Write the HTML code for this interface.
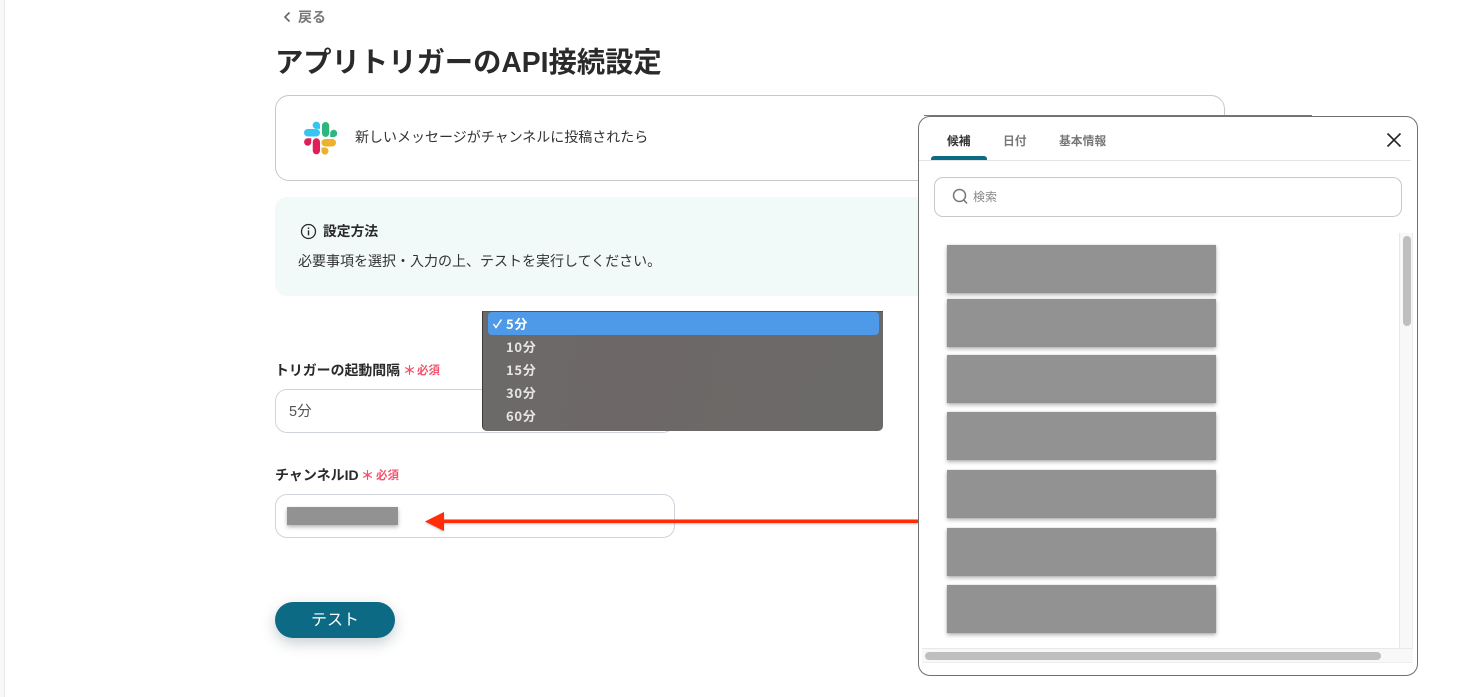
<!DOCTYPE html>
<html lang="ja">
<head>
<meta charset="utf-8">
<title>アプリトリガーのAPI接続設定</title>
<style>
html,body{margin:0;padding:0;background:#fff;}
body{width:1460px;height:697px;position:relative;overflow:hidden;font-family:"Liberation Sans","Noto Sans CJK JP",sans-serif;color:#2a2a2a;}
.a{position:absolute;white-space:nowrap;}
.box{position:absolute;box-sizing:border-box;background:#fff;}
.g{position:absolute;left:947px;width:269px;background:#929292;box-shadow:0 2px 4px rgba(0,0,0,.3),0 0 1px rgba(0,0,0,.2);}
.opt{position:absolute;left:23px;font-family:"Noto Sans CJK JP",sans-serif;font-size:13px;line-height:20px;color:#e6e6e6;font-weight:700;letter-spacing:.7px;}
.req{color:#f4516c;font-size:11.5px;font-weight:700;line-height:20px;}
</style>
</head>
<body>
<div class="a" style="left:0;top:0;width:4px;height:697px;background:#f8f8f8;border-right:1px solid #e8e8e8;"></div>

<svg class="a" style="left:282px;top:11px" width="10" height="12" viewBox="0 0 10 12"><path d="M7.500 1.500 3 6l4.500 4.500" fill="none" stroke="#666" stroke-width="1.600"/></svg>
<div class="a" style="left:298px;top:7px;font-size:14px;line-height:20px;font-weight:700;color:#777;">戻る</div>
<div class="a" style="left:275px;top:42px;font-size:28.300px;line-height:40px;font-weight:700;color:#2a2a2a;">アプリトリガーのAPI接続設定</div>

<div class="box" style="left:275px;top:95px;width:950px;height:86px;border:1px solid #c8c8c8;border-radius:14px;"></div>
<svg class="a" style="left:303.500px;top:121px" width="33" height="34" viewBox="0 0 34 34" preserveAspectRatio="none">
<rect x="0" y="8" width="16.500" height="7.500" rx="3.700" fill="#36c5f0"/>
<path d="M12.500 .7a3.600 3.600 0 0 0 0 7.200h4V4.300A3.700 3.700 0 0 0 12.500 .7z" fill="#36c5f0"/>
<rect x="18.500" y="1" width="7.500" height="15" rx="3.700" fill="#2eb67d"/>
<path d="M27 12.300a3.600 3.600 0 1 1 3.600 3.700H27z" fill="#2eb67d"/>
<path d="M3.800 17.300H7.500V21A3.700 3.700 0 1 1 3.800 17.300z" fill="#e01e5a"/>
<rect x="9" y="17.300" width="7.500" height="16" rx="3.700" fill="#e01e5a"/>
<rect x="18" y="18" width="15" height="7.500" rx="3.700" fill="#ecb22e"/>
<path d="M18 26.500h3.700a3.600 3.600 0 1 1-3.700 3.600z" fill="#ecb22e"/>
</svg>
<div class="a" style="left:355px;top:127px;font-size:14px;line-height:20px;color:#333;">新しいメッセージがチャンネルに投稿されたら</div>

<div class="box" style="left:275px;top:197px;width:950px;height:99px;background:#f1f9f9;border-radius:12px;"></div>
<svg class="a" style="left:300px;top:223px" width="17" height="17" viewBox="0 0 17 17"><circle cx="8.500" cy="8.500" r="7" fill="none" stroke="#2a2a2a" stroke-width="1.300"/><rect x="7.800" y="7.300" width="1.400" height="5" fill="#2a2a2a"/><rect x="7.800" y="4.500" width="1.400" height="1.500" fill="#2a2a2a"/></svg>
<div class="a" style="left:323px;top:222px;font-size:13.800px;line-height:20px;font-weight:700;color:#2a2a2a;">設定方法</div>
<div class="a" style="left:298px;top:251px;font-size:14px;line-height:20px;color:#333;">必要事項を選択・入力の上、テストを実行してください。</div>

<div class="a" style="left:275px;top:360px;font-size:13.900px;line-height:20px;font-weight:700;color:#2a2a2a;">トリガーの起動間隔</div>
<div class="a req" style="left:403px;top:361px;font-size:13px;">＊</div>
<div class="a req" style="left:417px;top:361px;">必須</div>
<div class="box" style="left:275px;top:389px;width:400px;height:44px;border:1px solid #cfd4dc;border-radius:12px;"></div>
<div class="a" style="left:289px;top:402px;font-size:14.500px;line-height:20px;color:#555;">5分</div>

<div class="a" style="left:275px;top:465px;font-size:14px;line-height:20px;font-weight:700;color:#2a2a2a;">チャンネルID</div>
<div class="a req" style="left:361px;top:466px;font-size:13px;">＊</div>
<div class="a req" style="left:376px;top:466px;">必須</div>
<div class="box" style="left:275px;top:494px;width:400px;height:44px;border:1px solid #cfd4dc;border-radius:12px;"></div>
<div class="a" style="left:287px;top:507px;width:111px;height:18px;background:#929292;box-shadow:0 2px 4px rgba(0,0,0,.3);"></div>

<svg class="a" style="left:424px;top:510px;filter:drop-shadow(0 1px 1px rgba(0,0,0,.25))" width="496" height="24" viewBox="0 0 496 24"><rect x="18" y="9.500" width="476" height="3.500" fill="#ff2d0a"/><path d="M1 11.500 20 2v19z" fill="#ff2d0a"/></svg>

<div class="box" style="left:275px;top:602px;width:120px;height:36px;border-radius:18px;background:#0d6a84;box-shadow:0 5px 14px rgba(30,60,80,.25);color:#fff;font-size:16px;line-height:37px;text-align:center;">テスト</div>

<!-- native select dropdown -->
<div class="box" style="left:482px;top:311px;width:401px;height:120px;background:linear-gradient(100deg,#6c6a69,#6d6867 35%,#6b6a68);border-left:1px solid #3a3a3a;border-top:1px solid #555;border-radius:0 0 5px 5px;">
  <div style="position:absolute;left:5px;top:0;width:391px;height:23px;background:#4e9ae9;border-radius:4px;"></div>
  <svg style="position:absolute;left:9px;top:6px" width="11" height="11" viewBox="0 0 11 11"><path d="M1.500 6 4 9.500 9.500 1.500" fill="none" stroke="#fff" stroke-width="1.500"/></svg>
  <div class="opt" style="top:2px;color:#fff;">5分</div>
  <div class="opt" style="top:25px;">10分</div>
  <div class="opt" style="top:48px;">15分</div>
  <div class="opt" style="top:71px;">30分</div>
  <div class="opt" style="top:94px;">60分</div>
</div>

<!-- modal -->
<div class="a" style="left:924px;top:115px;width:388px;height:1px;background:#777;"></div>
<div class="box" style="left:918px;top:116px;width:500px;height:560px;border:1px solid #707070;border-radius:12px;"></div>
<div class="a" style="left:919px;top:160px;width:492px;height:1px;background:#e4e4e4;"></div>
<div class="a" style="left:931px;top:156px;width:56px;height:4px;background:#0d6a84;border-radius:3px 3px 0 0;"></div>
<div class="a" style="left:947px;top:131px;font-size:11.800px;line-height:20px;font-weight:700;color:#333;">候補</div>
<div class="a" style="left:1003px;top:131px;font-size:11.800px;line-height:20px;font-weight:700;color:#777;">日付</div>
<div class="a" style="left:1059px;top:131px;font-size:11.800px;line-height:20px;font-weight:700;color:#777;">基本情報</div>
<svg class="a" style="left:1386px;top:132px" width="16" height="16" viewBox="0 0 16 16"><path d="M1.500 1.500 14.500 14.500M14.500 1.500 1.500 14.500" stroke="#222" stroke-width="1.600" fill="none"/></svg>

<div class="box" style="left:934px;top:177px;width:468px;height:40px;border:1px solid #c8c8c8;border-radius:9px;"></div>
<svg class="a" style="left:950px;top:187px" width="20" height="20" viewBox="0 0 20 20"><circle cx="9.500" cy="8.500" r="6" fill="none" stroke="#777" stroke-width="1.500"/><path d="M13.800 13 17 16.500" stroke="#777" stroke-width="1.500" fill="none"/></svg>
<div class="a" style="left:973px;top:187px;font-size:12px;line-height:20px;color:#888;">検索</div>

<div class="a" style="left:1399px;top:233px;width:14px;height:430px;background:#f8f8f8;border-left:1px solid #e8e8e8;border-right:1px solid #eee;box-sizing:border-box;"></div>
<div class="a" style="left:1403px;top:236px;width:8px;height:90px;background:#bfbfbf;border-radius:4px;"></div>
<div class="a" style="left:922px;top:648px;width:491px;height:15px;background:#f8f8f8;border-top:1px solid #e8e8e8;border-bottom:1px solid #eee;box-sizing:border-box;"></div>
<div class="a" style="left:925px;top:652px;width:456px;height:8px;background:#bfbfbf;border-radius:4px;"></div>

<div class="g" style="top:245px;height:48px;"></div>
<div class="g" style="top:299px;height:48px;"></div>
<div class="g" style="top:355px;height:48px;"></div>
<div class="g" style="top:412px;height:48px;"></div>
<div class="g" style="top:470px;height:48px;"></div>
<div class="g" style="top:528px;height:48px;"></div>
<div class="g" style="top:585px;height:48px;"></div>
</body>
</html>
